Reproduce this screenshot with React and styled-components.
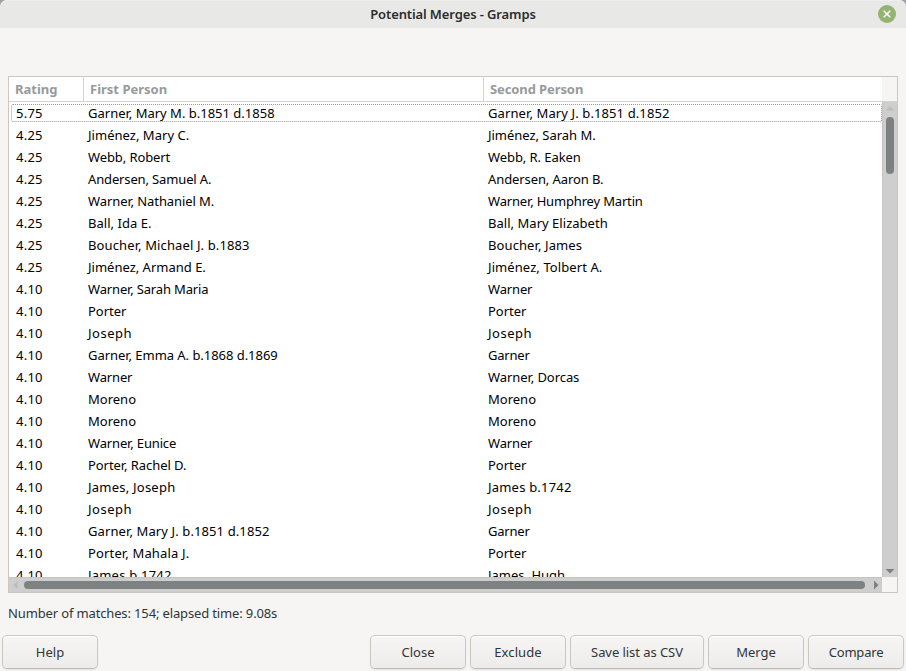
import React from "react";
import styled, { createGlobalStyle } from "styled-components";

const GlobalStyle = createGlobalStyle`
  *, *::before, *::after { box-sizing: border-box; }
  body { margin: 0; background: #a2a2a2; overflow: hidden; }
`;

const Window = styled.main`
  width: 906px;
  height: 671px;
  display: flex;
  flex-direction: column;
  overflow: hidden;
  background: #f6f5f4;
  border-radius: 7px 7px 0 0;
  color: #303638;
  font: 13px/22px "Noto Sans", "Open Sans", sans-serif;
  white-space: pre;
`;

const TitleBar = styled.header`
  flex: 0 0 28px;
  display: grid;
  grid-template-columns: 28px 1fr 28px;
  align-items: center;
  background: #e8e8e7;
  box-shadow: inset 0 1px #efefee;
  border-radius: 7px 7px 0 0;
`;

const Title = styled.h1`
  grid-column: 2;
  margin: 0;
  text-align: center;
  font-size: 13px;
  font-weight: 600;
  line-height: 26px;
  letter-spacing: ${(p) => p.$spacing}px;
  color: #2c2c2c;
`;

const CloseWindow = styled.button`
  width: 18px;
  height: 18px;
  padding: 0;
  border: 0;
  border-radius: 50%;
  background: #92b372;
  display: grid;
  place-items: center;
`;

const MatchList = styled.section`
  flex: 0 0 517px;
  margin: 48px 8px 0;
  border: 1px solid #cdc7c2;
  display: grid;
  grid-template-columns: 873px 15px;
  grid-template-rows: 25px 475px 15px;
  background: #f6f5f4;
`;

const ColumnHeads = styled.div`
  display: grid;
  grid-template-columns: 75px 400px 1fr;
  background: #fff;
  border-bottom: 1px solid #d3d3d2;
`;

const ColumnHead = styled.div`
  padding-left: 6px;
  border-right: ${(p) => (p.$last ? 0 : "1px solid #d3d3d2")};
  font-weight: 700;
  line-height: 24px;
  letter-spacing: ${(p) => p.$spacing || 0}px;
  color: #979a9b;
`;

const HeadCorner = styled.div`
  border-bottom: 1px solid #d3d3d2;
`;

const Rows = styled.div`
  overflow: hidden;
  background: #fff;
  color: #000;
`;

const Row = styled.div`
  position: relative;
  height: 22px;
  padding-left: 5px;
  display: grid;
  grid-template-columns: 74px 400px 1fr;
`;

const FocusRing = styled.div`
  position: absolute;
  inset: 2px 0 2px 2px;
  border: 1px dotted #979797;
  border-radius: 2px;
`;

const Cell = styled.span`
  padding-left: ${(p) => (p.$rating ? 2 : 0)}px;
  letter-spacing: ${(p) => p.$spacing}px;
`;

const VerticalBar = styled.div`
  display: flex;
  flex-direction: column;
  align-items: center;
  border-left: 1px solid #c5c4c2;
  background: #cecece;
`;

const HorizontalBar = styled.div`
  display: flex;
  align-items: center;
  border-top: 1px solid #c5c4c2;
  background: #cecece;
`;

const VerticalThumb = styled.div`
  width: 8px;
  height: 57px;
  border-radius: 4px;
  background: #7e8182;
  margin-bottom: auto;
`;

const HorizontalThumb = styled.div`
  width: 841px;
  height: 8px;
  border-radius: 4px;
  background: #7e8182;
`;

const Status = styled.p`
  margin: 9px 8px 0;
  letter-spacing: -0.14px;
`;

const Actions = styled.footer`
  display: flex;
  gap: 4px;
  padding: 11px 2px 0;
`;

const ActionButton = styled.button`
  width: ${(p) => p.$width || 96}px;
  height: 34px;
  padding: 0 0 1px;
  margin-right: ${(p) => (p.$first ? "auto" : 0)};
  border: 1px solid #cdc7c2;
  border-bottom-color: #bfb8b1;
  border-radius: 5px;
  background: linear-gradient(#f6f5f4, #edecea);
  box-shadow: inset 0 1px #fff, 0 1px 2px rgba(0, 0, 0, 0.07);
  color: #303638;
  font: 13px/22px "Noto Sans", "Open Sans", sans-serif;
  letter-spacing: ${(p) => p.$spacing || 0}px;
`;

// Each name is paired with its letter spacing in pixels.
const matches = [
  ["5.75", ["Garner, Mary M. b.1851 d.1858", 0], ["Garner, Mary J. b.1851 d.1852", 0.11]],
  ["4.25", ["Jiménez, Mary C.", 0.03], ["Jiménez, Sarah M.", -0.03]],
  ["4.25", ["Webb, Robert", -0.1], ["Webb, R. Eaken", -0.07]],
  ["4.25", ["Andersen, Samuel A.", -0.14], ["Andersen, Aaron B.", -0.1]],
  ["4.25", ["Warner, Nathaniel M.", -0.09], ["Warner, Humphrey Martin", -0.17]],
  ["4.25", ["Ball, Ida E.", 0.04], ["Ball, Mary Elizabeth", 0.03]],
  ["4.25", ["Boucher, Michael J. b.1883", 0.12], ["Boucher, James", 0.1]],
  ["4.25", ["Jiménez, Armand E.", 0], ["Jiménez, Tolbert A.", 0.09]],
  ["4.10", ["Warner, Sarah Maria", -0.16], ["Warner", -0.16]],
  ["4.10", ["Porter", 0], ["Porter", 0]],
  ["4.10", ["Joseph", 0.5], ["Joseph", 0.5]],
  ["4.10", ["Garner, Emma A. b.1868 d.1869", -0.04], ["Garner", -0.2]],
  ["4.10", ["Warner", -0.16], ["Warner, Dorcas", -0.07]],
  ["4.10", ["Moreno", 0], ["Moreno", 0]],
  ["4.10", ["Moreno", 0], ["Moreno", 0]],
  ["4.10", ["Warner, Eunice", -0.15], ["Warner", -0.16]],
  ["4.10", ["Porter, Rachel D.", -0.06], ["Porter", 0]],
  ["4.10", ["James, Joseph", 0.23], ["James b.1742", 0.2]],
  ["4.10", ["Joseph", 0.5], ["Joseph", 0.5]],
  ["4.10", ["Garner, Mary J. b.1851 d.1852", 0.11], ["Garner", -0.2]],
  ["4.10", ["Porter, Mahala J.", 0.15], ["Porter", 0]],
  ["4.10", ["James b.1742", 0.2], ["James, Hugh", 0]],
];

const Arrow = ({ w, h, d, color }) => (
  <svg width={w} height={h} viewBox={`0 0 ${w} ${h}`}>
    <path d={d} fill={color} />
  </svg>
);

export default function App() {
  return (
    <>
      <GlobalStyle />
      <Window>
        <TitleBar>
          <Title $spacing={-0.12}>Potential Merges - Gramps</Title>
          <CloseWindow aria-label="Close window">
            <svg width="18" height="18" viewBox="0 0 18 18">
              <path d="M5.7 5.7l6.6 6.6m0-6.6l-6.6 6.6" stroke="#fff" strokeWidth="1.6" />
            </svg>
          </CloseWindow>
        </TitleBar>
        <MatchList>
          <ColumnHeads>
            <ColumnHead>Rating</ColumnHead>
            <ColumnHead>First Person</ColumnHead>
            <ColumnHead $last $spacing={-0.1}>Second Person</ColumnHead>
          </ColumnHeads>
          <HeadCorner />
          <Rows>
            {matches.map(([rating, first, second], i) => (
              <Row key={i}>
                {i === 0 && <FocusRing />}
                <Cell $rating $spacing={0.25}>{rating}</Cell>
                <Cell $spacing={first[1]}>{first[0]}</Cell>
                <Cell $spacing={second[1]}>{second[0]}</Cell>
              </Row>
            ))}
          </Rows>
          <VerticalBar>
            <Arrow w={14} h={15} d="M3 8.5L7 4l4 4.5z" color="#bcbdbd" />
            <VerticalThumb />
            <Arrow w={14} h={10} d="M2.5 2h9L7 6.5z" color="#7e8182" />
          </VerticalBar>
          <HorizontalBar>
            <Arrow w={15} h={14} d="M8.5 3L4 7l4.5 4z" color="#bcbdbd" />
            <HorizontalThumb />
            <Arrow w={17} h={14} d="M9 2.5v9l4.5-4.5z" color="#7e8182" />
          </HorizontalBar>
        </MatchList>
        <Status>Number of matches: 154; elapsed time: 9.08s</Status>
        <Actions>
          <ActionButton $first>Help</ActionButton>
          <ActionButton>Close</ActionButton>
          <ActionButton $spacing={0.1}>Exclude</ActionButton>
          <ActionButton $width={134} $spacing={-0.06}>Save list as CSV</ActionButton>
          <ActionButton>Merge</ActionButton>
          <ActionButton $spacing={-0.2}>Compare</ActionButton>
        </Actions>
      </Window>
    </>
  );
}
